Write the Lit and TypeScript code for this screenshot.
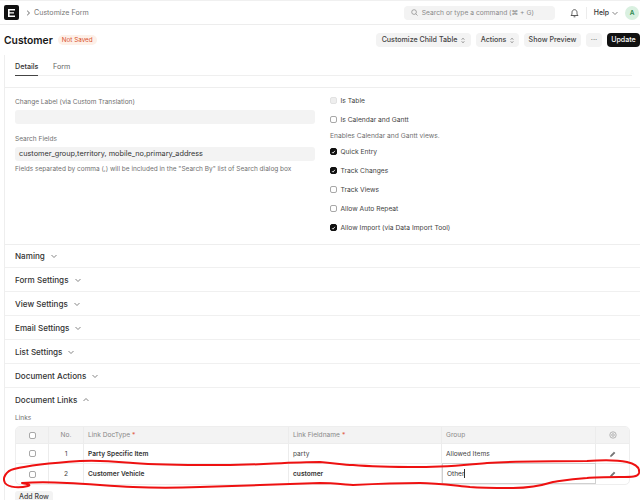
import { LitElement, html, css, svg } from "lit";
import { customElement } from "lit/decorators.js";

const chevDown = html`<svg class="chev" viewBox="0 0 8 8"><path d="M1.5 3l2.5 2.5L6.5 3" fill="none" stroke="currentColor" stroke-width=".8"/></svg>`;
const updown = html`<svg class="ud" viewBox="0 0 6 10"><path d="M1.2 3.6L3 1.8l1.8 1.8M1.2 6.4L3 8.2l1.8-1.8" fill="none" stroke="#333" stroke-width=".9"/></svg>`;
const pencil = html`<svg class="pencil" viewBox="0 0 8 8"><path d="M1.400 6.600l.3-1.400L5 1.900l1.100 1.100L2.800 6.300z" fill="#777" stroke="#555" stroke-width=".4"/></svg>`;

@customElement("app-root")
export class AppRoot extends LitElement {
  static styles = css`
    :host { display: block; position: relative; width: 640px; height: 500px; overflow: hidden; background: #fff; color: #383838; font-family: Inter, "Noto Sans", sans-serif; font-size: 7px; line-height: 10px; }
    * { box-sizing: border-box; }
    .nav { height: 25px; border-top: 1px solid #f0f0f0; border-bottom: 1px solid #ededed; display: flex; align-items: center; padding-left: 4px; }
    .logo { width: 15px; height: 15px; background: #111; border-radius: 2px; display: flex; align-items: center; justify-content: center; }
    .logo svg { width: 7px; height: 8px; }
    .crumb { margin-left: 7px; color: #777; font-size: 7.1px; display: flex; align-items: center; gap: 3px; }
    .crumb svg { width: 5px; height: 6px; }
    .search { margin-left: auto; width: 151px; height: 14px; border-radius: 4px; background: #f3f3f3; display: flex; align-items: center; padding-left: 7px; gap: 4px; color: #8a8a8a; font-size: 6.7px; }
    .search svg { width: 7px; height: 7px; }
    .bell { width: 9px; height: 10px; margin-left: 15px; }
    .sep { width: 1px; height: 12px; background: #ececec; margin-left: 7px; }
    .help { margin-left: 7px; font-weight: 500; color: #333; font-size: 6.9px; display: flex; align-items: center; gap: 2px; }
    .chev { width: 8px; height: 8px; color: #666; }
    .avatar { width: 14px; height: 14px; margin: 0 1px 0 6px; border-radius: 50%; background: #d9f0e0; color: #2f8a50; font-size: 6.5px; font-weight: 600; display: flex; align-items: center; justify-content: center; }
    .head { height: 30px; display: flex; align-items: center; padding-left: 4px; }
    h1 { margin: 0; font-size: 10.3px; font-weight: 600; color: #171717; line-height: 14px; }
    .badge { margin-left: 5px; height: 10px; padding: 0 4px; border-radius: 5px; background: #fdf0e8; color: #d9512c; font-size: 6.3px; line-height: 10px; }
    .actions { margin-left: auto; display: flex; gap: 5px; align-items: center; }
    .btn { height: 14px; border-radius: 4px; background: #f3f3f3; color: #444; font-size: 7.1px; font-weight: 500; display: flex; align-items: center; justify-content: center; gap: 4px; white-space: nowrap; }
    .b1 { width: 95px; } .b2 { width: 43px; } .b3 { width: 57px; } .b4 { width: 16px; color: #777; }
    .b5 { width: 33px; background: #111; color: #fff; }
    .ud { width: 4px; height: 7px; }
    .form { margin-left: 4px; border-left: 1px solid #eeeeee; }
    .tabs { height: 21px; margin: 0 8px 0 10px; border-bottom: 1px solid #efefef; display: flex; gap: 15px; }
    .tab { height: 21px; padding-top: 7px; color: #666; font-size: 7.2px; }
    .tab.on { color: #333; font-weight: 500; border-bottom: 1px solid #444; width: 23px; white-space: nowrap; }
    .main { margin-top: 11px; border-top: 1px solid #eeeeee; border-bottom: 1px solid #eeeeee; height: 158px; display: grid; grid-template-columns: 315px 1fr; padding: 9px 0 0 10px; }
    .main + .sec { height: 23px; }
    .label { color: #707070; font-size: 6.55px; height: 10px; }
    .input { margin-top: 3px; width: 300px; height: 14px; border-radius: 3px; background: #f3f3f3; color: #333; font-size: 7.3px; line-height: 14px; padding-left: 4px; }
    .f2 { margin-top: 10px; }
    .desc { color: #707070; font-size: 6.5px; margin-top: 3px; white-space: nowrap; }
    .checks { display: flex; flex-direction: column; margin-top: -6px; }
    .cr { height: 19px; display: flex; align-items: center; gap: 3.5px; color: #444; font-size: 6.7px; }
    .cr.d { height: 13px; color: #707070; }
    .box { width: 7px; height: 7px; border-radius: 2px; border: 1px solid #a8a8a8; background: #fff; flex: none; display: flex; align-items: center; justify-content: center; }
    .box.on { background: #111; border-color: #111; }
    .box.off { background: #eeeeee; border-color: #e2e2e2; }
    .box svg { width: 6px; height: 6px; }
    .sec { height: 24px; border-bottom: 1px solid #f0f0f0; padding-left: 10px; display: flex; align-items: center; gap: 5px; font-size: 8.1px; font-weight: 500; color: #333; }
    .sec.open { border-bottom: none; }
    .links { padding: 0 10px; }
    .links .label { height: 12px; margin-bottom: 2px; padding-top: 1px; }
    .table { width: 615px; border: 1px solid #eeeeee; border-radius: 5px; overflow: hidden; }
    .tr { display: grid; grid-template-columns: 33px 35px 205px 153px 154px 1fr; height: 20px; border-bottom: 1px solid #ededed; }
    .tr:last-child { border-bottom: none; }
    .tr.th { height: 17px; background: #f3f3f3; color: #888; }
    .td { border-right: 1px solid #ececec; display: flex; align-items: center; padding-left: 4px; font-size: 6.6px; color: #444; white-space: nowrap; }
    .td:last-child { border-right: none; justify-content: center; padding: 0; }
    .th .td { color: #888; }
    .td.c { justify-content: center; padding: 0; }
    .td.strong { font-weight: 600; color: #333; }
    .req { color: #e0604a; margin-left: 2px; }
    .edit { border: 1px solid #d0d0d0; height: 21px; margin-top: -1px; color: #333; }
    .caret { display: inline-block; width: 1px; height: 9px; background: #333; }
    .pencil { width: 8px; height: 8px; }
    .gear { width: 8px; height: 8px; }
    .add { margin-top: 6px; width: 38px; height: 10px; background: #f3f3f3; border-radius: 3px 3px 0 0; color: #444; font-size: 7px; font-weight: 500; text-align: center; line-height: 11px; }
    .scribble { position: absolute; left: 0; top: 0; width: 640px; height: 500px; pointer-events: none; }
  `;

  private check(state: string, label: string) {
    return html`<div class="cr"><span class="box ${state}">${state === "on"
      ? html`<svg viewBox="0 0 6 6"><path d="M1.2 3.2l1.2 1.2 2.3-2.8" fill="none" stroke="#fff" stroke-width="1"/></svg>` : ""}</span>${label}</div>`;
  }

  private row(n: string, a: string, b: string, g: unknown, edit = false) {
    return html`<div class="tr">
      <div class="td c"><span class="box"></span></div>
      <div class="td c">${n}</div>
      <div class="td strong">${a}</div>
      <div class="td ${edit ? "strong" : ""}">${b}</div>
      <div class="td ${edit ? "edit" : ""}">${g}</div>
      <div class="td">${pencil}</div>
    </div>`;
  }

  render() {
    return html`
      <div class="nav">
        <div class="logo"><svg viewBox="0 0 7 8"><path d="M0 0h7v1.5H1.6v1.7H6v1.4H1.6v1.9H7V8H0z" fill="#fff"/></svg></div>
        <div class="crumb"><svg viewBox="0 0 5 6"><path d="M1.2.8L3.5 3 1.2 5.2" fill="none" stroke="#555" stroke-width=".9"/></svg>Customize Form</div>
        <div class="search">
          <svg viewBox="0 0 8 8"><circle cx="3.5" cy="3.5" r="2.7" fill="none" stroke="#777" stroke-width=".7"/><path d="M5.5 5.5L7.5 7.5" stroke="#777" stroke-width=".7"/></svg>
          Search or type a command (⌘ + G)
        </div>
        <svg class="bell" viewBox="0 0 9 10"><path d="M1 7.5c.9-.8 1-1.6 1-3 0-1.6 1-2.8 2.5-2.8S7 2.900 7 4.500c0 1.400.1 2.200 1 3z" fill="none" stroke="#333" stroke-width=".8"/><path d="M3.600 8.800h1.800" stroke="#333" stroke-width=".8"/></svg>
        <div class="sep"></div>
        <div class="help">Help ${chevDown}</div>
        <div class="avatar">A</div>
      </div>
      <div class="head">
        <h1>Customer</h1>
        <span class="badge">Not Saved</span>
        <div class="actions">
          <div class="btn b1">Customize Child Table ${updown}</div>
          <div class="btn b2">Actions ${updown}</div>
          <div class="btn b3">Show Preview</div>
          <div class="btn b4">···</div>
          <div class="btn b5">Update</div>
        </div>
      </div>
      <div class="form">
        <div class="tabs">
          <div class="tab on">Details</div>
          <div class="tab">Form</div>
        </div>
        <div class="main">
          <div>
            <div class="label">Change Label (via Custom Translation)</div>
            <div class="input"></div>
            <div class="label f2">Search Fields</div>
            <div class="input">customer_group,territory, mobile_no,primary_address</div>
            <div class="desc">Fields separated by comma (,) will be included in the "Search By" list of Search dialog box</div>
          </div>
          <div class="checks">
            ${this.check("off", "Is Table")}
            ${this.check("", "Is Calendar and Gantt")}
            <div class="cr d">Enables Calendar and Gantt views.</div>
            ${this.check("on", "Quick Entry")}
            ${this.check("on", "Track Changes")}
            ${this.check("", "Track Views")}
            ${this.check("", "Allow Auto Repeat")}
            ${this.check("on", "Allow Import (via Data Import Tool)")}
          </div>
        </div>
        ${["Naming", "Form Settings", "View Settings", "Email Settings", "List Settings", "Document Actions"].map(
          (s) => html`<div class="sec">${s} ${chevDown}</div>`
        )}
        <div class="sec open">Document Links
          <svg class="chev" viewBox="0 0 8 8"><path d="M1.5 5L4 2.500 6.500 5" fill="none" stroke="currentColor" stroke-width=".8"/></svg>
        </div>
        <div class="links">
          <div class="label">Links</div>
          <div class="table">
            <div class="tr th">
              <div class="td c"><span class="box"></span></div>
              <div class="td c">No.</div>
              <div class="td">Link DocType <span class="req">*</span></div>
              <div class="td">Link Fieldname <span class="req">*</span></div>
              <div class="td">Group</div>
              <div class="td"><svg class="gear" viewBox="0 0 8 8"><circle cx="4" cy="4" r="3.200" fill="none" stroke="#999" stroke-width=".7"/><circle cx="4" cy="4" r="1.300" fill="none" stroke="#999" stroke-width=".7"/></svg></div>
            </div>
            ${this.row("1", "Party Specific Item", "party", "Allowed Items")}
            ${this.row("2", "Customer Vehicle", "customer", html`Other<span class="caret"></span>`, true)}
          </div>
          <div class="add">Add Row</div>
        </div>
      </div>
      <svg class="scribble" viewBox="0 0 640 500">
        ${svg`<path d="M22 483C27 484 32 485 28 486C20 488 9 488 5 483C2 478 6 471 14 469C30 465 50 463 80 461C105 460 120 462 133 463C160 465 190 465 213 465C250 466 285 462 320 462C335 463 343 465 353 465C375 467 400 467 420 467C445 467 465 465 487 463C520 461 555 461 587 461C600 460 618 460 627 462C636 464 640 468 639 473C638 477 632 477 620 477C605 477 595 477 587 478C570 479 560 481 553 482C540 486 526 488 513 488C497 488 483 488 470 487C450 485 435 483 420 483C395 483 373 484 353 485C340 484 330 483 320 483C280 484 240 486 200 487C175 488 155 488 133 487C110 486 90 484 67 483C50 482 35 482 22 483" fill="none" stroke="#ee1111" stroke-width="2" stroke-linecap="round"/>`}
      </svg>
    `;
  }
}
